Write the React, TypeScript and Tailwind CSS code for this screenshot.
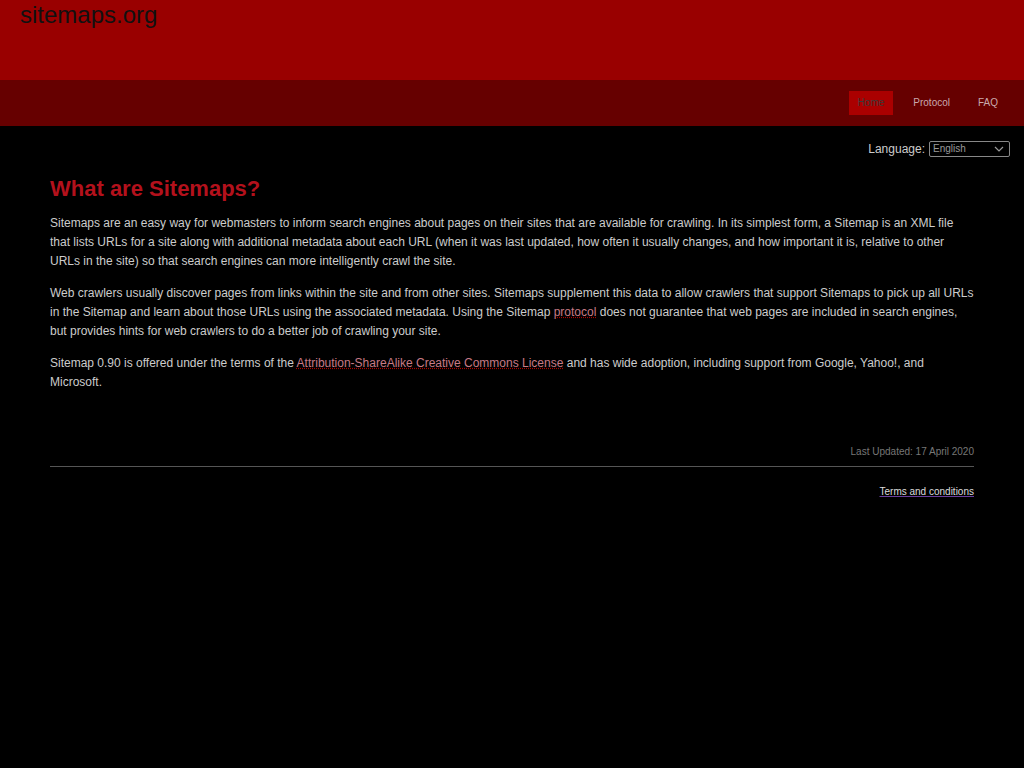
import React from 'react';

const navItems = [
  { label: 'Home', active: true },
  { label: 'Protocol', active: false },
  { label: 'FAQ', active: false },
];

const App: React.FC = () => {
  return (
    <div className="min-h-[768px] bg-black font-['Liberation_Sans',Arial,sans-serif] text-[#cccccc]">
      {/* header */}
      <header className="h-[80px] bg-[#990000] px-[20px]">
        <h1 className="pt-[1px] text-[24px] leading-[28px] text-[#111111]">sitemaps.org</h1>
      </header>

      {/* nav */}
      <nav className="flex h-[46px] items-center justify-end gap-[12px] bg-[#660000] pr-[18px]">
        {navItems.map((item) => (
          <a
            key={item.label}
            href="#"
            className={`py-[5px] text-[10px] leading-[14px] ${
              item.active ? 'bg-[#aa0000] px-[9px] text-[#3a3a3a]' : 'px-[8px] text-[#c9a9ad]'
            }`}
          >
            {item.label}
          </a>
        ))}
      </nav>

      {/* language */}
      <div className="flex items-center justify-end gap-[4px] pr-[14px] pt-[15px]">
        <span className="text-[12px] leading-[16px] text-[#cccccc]">Language:</span>
        <div className="flex h-[16px] w-[81px] items-center justify-between rounded-[2px] border border-[#888888] bg-black pl-[3px] pr-[5px]">
          <span className="text-[10px] leading-[12px] text-[#999999]">English</span>
          <svg width="10" height="6" viewBox="0 0 10 6" fill="none">
            <path d="M1 1L5 5L9 1" stroke="#999999" strokeWidth="1.2" />
          </svg>
        </div>
      </div>

      {/* content */}
      <main className="px-[50px]">
        <h2 className="mt-[18px] text-[22px] font-bold leading-[28px] text-[#b3111c]">What are Sitemaps?</h2>

        <div className="mt-[11px] flex w-[924px] flex-col gap-[13px] text-[12px] leading-[19px]">
          <p>
            Sitemaps are an easy way for webmasters to inform search engines about pages on their sites that are
            available for crawling. In its simplest form, a Sitemap is an XML file that lists URLs for a site along
            with additional metadata about each URL (when it was last updated, how often it usually changes, and how
            important it is, relative to other URLs in the site) so that search engines can more intelligently crawl
            the site.
          </p>
          <p>
            Web crawlers usually discover pages from links within the site and from other sites. Sitemaps supplement
            this data to allow crawlers that support Sitemaps to pick up all URLs in the Sitemap and learn about those
            URLs using the associated metadata. Using the Sitemap{' '}
            <a href="#" className="text-[#c77a86] underline decoration-dotted decoration-[#aa0000]">
              protocol
            </a>{' '}
            does not guarantee that web pages are included in search engines, but provides hints for web crawlers to
            do a better job of crawling your site.
          </p>
          <p>
            Sitemap 0.90 is offered under the terms of the{' '}
            <a href="#" className="text-[#c77a86] underline decoration-dotted decoration-[#aa0000]">
              Attribution-ShareAlike Creative Commons License
            </a>{' '}
            and has wide adoption, including support from Google, Yahoo!, and Microsoft.
          </p>
        </div>

        <footer className="mt-[53px] w-[924px]">
          <p className="text-right text-[10px] leading-[14px] text-[#777777]">Last Updated: 17 April 2020</p>
          <hr className="mt-[7px] border-t border-[#555555]" />
          <p className="mt-[18px] text-right text-[10px] leading-[14px]">
            <a href="#" className="text-[#dddddd] underline decoration-[#6b3fa0]">
              Terms and conditions
            </a>
          </p>
        </footer>
      </main>
    </div>
  );
};

export default App;
